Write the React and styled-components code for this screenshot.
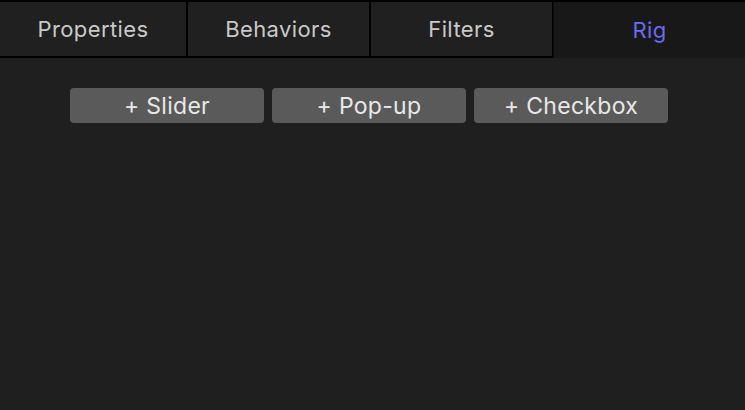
import React from "react";
import styled, { createGlobalStyle } from "styled-components";

const GlobalStyle = createGlobalStyle`
  html, body {
    margin: 0;
    padding: 0;
    background: #1f1f1f;
  }
  body {
    font-family: "Inter", "Noto Sans", sans-serif;
  }
`;

const Panel = styled.div`
  width: 745px;
  height: 410px;
  background: #1f1f1f;
  display: flex;
  flex-direction: column;
  overflow: hidden;
`;

const TabBar = styled.div`
  display: flex;
  gap: 2px;
  background: #000;
  padding: 2px 0 2px 0;
  height: 54px;
`;

const Tab = styled.div`
  flex: ${(p) => (p.width ? `0 0 ${p.width}px` : "1")};
  display: flex;
  align-items: center;
  justify-content: center;
  background: ${(p) => (p.active ? "#181818" : "#202020")};
  color: ${(p) => (p.active ? "#6a6af2" : "#c9c9c9")};
  font-size: 22px;
  font-weight: 400;
  letter-spacing: 0.4px;
  margin-bottom: ${(p) => (p.active ? "-2px" : "0")};
  margin-left: ${(p) => (p.active ? "-1px" : "0")};
  border-left: ${(p) => (p.active ? "1px solid #0f0f0f" : "none")};
`;

const Actions = styled.div`
  display: flex;
  justify-content: center;
  gap: 8px;
  padding: 30px 7px 0 0;
`;

const AddButton = styled.button`
  width: 194px;
  height: 35px;
  border: none;
  border-radius: 4px;
  background: #5a5a5a;
  color: #e8e8e8;
  font-family: "Inter", "Noto Sans", sans-serif;
  font-size: 23px;
  font-weight: 400;
  letter-spacing: 0.3px;
  padding: 0;
`;

const tabs = [
  { label: "Properties", width: 186 },
  { label: "Behaviors", width: 181 },
  { label: "Filters", width: 181 },
  { label: "Rig" },
];
const buttons = ["+ Slider", "+ Pop-up", "+ Checkbox"];

export default function App() {
  return (
    <Panel>
      <GlobalStyle />
      <TabBar>
        {tabs.map((t) => (
          <Tab key={t.label} width={t.width} active={t.label === "Rig"}>
            {t.label}
          </Tab>
        ))}
      </TabBar>
      <Actions>
        {buttons.map((b) => (
          <AddButton key={b}>{b}</AddButton>
        ))}
      </Actions>
    </Panel>
  );
}
